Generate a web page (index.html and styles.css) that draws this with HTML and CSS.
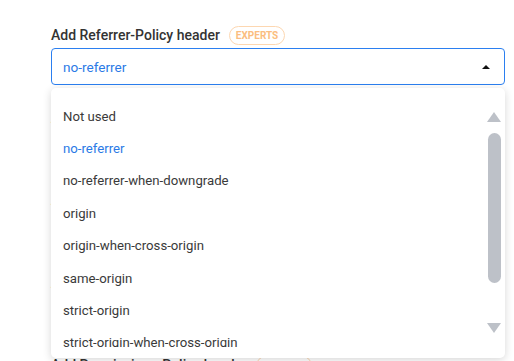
FILE: index.html
```html
<!DOCTYPE html>
<html lang="en">
<head>
    <meta charset="UTF-8">
    <meta name="viewport" content="width=device-width, initial-scale=1.0">
    <title>Security headers</title>
    <link rel="stylesheet" href="styles.css">
</head>
<body>
    <div class="form">
        <div class="field field-open">
            <div class="field-label">
                <span>Add Referrer-Policy header</span>
                <span class="badge">EXPERTS</span>
            </div>
            <div class="select select-active">
                <span class="select-value">no-referrer</span>
                <span class="caret caret-up"></span>
            </div>

            <!-- открытый список -->
            <div class="dropdown">
                <div class="dropdown-list">
                    <div class="option">Not used</div>
                    <div class="option option-selected">no-referrer</div>
                    <div class="option">no-referrer-when-downgrade</div>
                    <div class="option">origin</div>
                    <div class="option">origin-when-cross-origin</div>
                    <div class="option">same-origin</div>
                    <div class="option">strict-origin</div>
                    <div class="option">strict-origin-when-cross-origin</div>
                    <div class="option">unsafe-url</div>
                </div>
                <div class="scrollbar">
                    <span class="scroll-arrow scroll-up"></span>
                    <span class="scroll-thumb"></span>
                    <span class="scroll-arrow scroll-down"></span>
                </div>
            </div>
        </div>

        <div class="field">
            <div class="field-label">
                <span>Add X-Frame-Options header</span>
            </div>
            <div class="select">
                <span class="select-text">SAMEORIGIN</span>
                <span class="caret"></span>
            </div>
        </div>

        <div class="field">
            <div class="field-label">
                <span>Add X-Content-Type-Options header</span>
            </div>
            <div class="select">
                <span class="select-text">nosniff</span>
                <span class="caret"></span>
            </div>
        </div>

        <div class="field">
            <div class="field-label">
                <span>Add Strict-Transport-Security header</span>
            </div>
            <div class="select">
                <span class="select-text">Not used</span>
                <span class="caret"></span>
            </div>
        </div>

        <div class="field">
            <div class="field-label">
                <span>Add Permissions-Policy header</span>
                <span class="badge">EXPERTS</span>
            </div>
            <div class="select">
                <span class="select-text">Not used</span>
                <span class="caret"></span>
            </div>
        </div>
    </div>
</body>
</html>
```

FILE: styles.css
```css
body {
    font-family: Roboto, "Liberation Sans", Arial, sans-serif;
    background-color: #ffffff;
    color: #333333;
    margin: 0;
    padding: 0;
}

.form {
    display: flex;
    flex-direction: column;
    gap: 22.5px;
    padding: 25px 9px 0 51px;
}

.field {
    display: flex;
    flex-direction: column;
    gap: 3px;
}

.field-open {
    position: relative;
    z-index: 2;
}

.field-label {
    display: flex;
    align-items: center;
    gap: 9px;
    height: 20px;
    font-size: 14px;
    font-weight: 500;
    color: #333333;
}

.badge {
    display: inline-flex;
    align-items: center;
    height: 17px;
    padding: 0 6px;
    border: 1px solid #fdd7b1;
    border-radius: 10px;
    font-size: 10px;
    font-weight: 700;
    color: #fbbd80;
}

.select {
    display: flex;
    align-items: center;
    justify-content: space-between;
    height: 35px;
    padding: 0 14px 0 11px;
    border: 1px solid #d5d8dd;
    border-radius: 4px;
    font-size: 14px;
}

.select-active {
    border-color: #2b7ff0;
}

.select-value {
    color: #2b7ae6;
    font-size: 13.6px;
}

.caret {
    width: 0;
    height: 0;
    border-left: 4px solid transparent;
    border-right: 4px solid transparent;
    border-top: 4px solid #111111;
}

    .caret-up {
        border-top: none;
        border-bottom: 4px solid #111111;
    }

.dropdown {
    position: absolute;
    top: 63px;
    left: 0;
    right: 0;
    display: flex;
    height: 251px;
    padding: 8px 0 11px;
    background-color: #ffffff;
    border-radius: 5px;
    box-shadow: 0 2px 8px rgba(0, 0, 0, 0.16);
}

.dropdown-list {
    flex: 1;
    overflow: hidden;
    padding-top: 4px;
}

.option {
    display: flex;
    align-items: center;
    height: 32.4px;
    padding: 0 12px;
    font-size: 13.2px;
    color: #3a3a3a;
    white-space: nowrap;
}

.option-selected {
    color: #2b7ae6;
}

.scrollbar {
    display: flex;
    flex-direction: column;
    align-items: center;
    width: 14px;
    padding: 16px 4px 0 0;
}

.scroll-arrow {
    width: 0;
    height: 0;
    border-left: 7px solid transparent;
    border-right: 7px solid transparent;
}

.scroll-up {
    border-bottom: 10px solid #bdc1c8;
}

.scroll-down {
    margin-top: 40px;
    border-top: 10px solid #bdc1c8;
}

.scroll-thumb {
    width: 13px;
    height: 150px;
    margin-top: 11px;
    background-color: #bdc1c8;
    border-radius: 7px;
}
```
